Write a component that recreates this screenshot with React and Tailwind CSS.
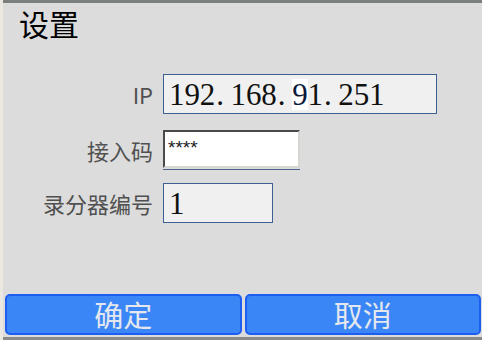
import React from 'react';

const CJK = "font-['Noto_Sans_CJK_SC',sans-serif]";

function Digits({ text, hi }) {
  return (
    <span className="flex">
      {text.split('').map((c, i) => (
        <span
          key={i}
          className={`inline-block w-[15.4px] ${c === '.' ? 'text-left pl-[1px]' : 'text-center'} ${i === hi ? 'bg-white text-[#0a1a3a]' : ''}`}
        >
          {c}
        </span>
      ))}
    </span>
  );
}

function Row({ label, children }) {
  return (
    <div className="flex items-center">
      <div className={`w-[150px] text-right text-[22px] text-[#505050] ${CJK}`}>{label}</div>
      <div className="ml-[10px]">{children}</div>
    </div>
  );
}

export default function App() {
  return (
    <div className="w-[482px] h-[340px] bg-[#dcdcdc] border-l-[3px] border-l-[#ebe8e2] flex flex-col">
      <div className="h-[3px] bg-[#7b807c]" />
      <div className={`h-[40px] pl-[16px] text-[30px] leading-[40px] text-black ${CJK}`}>设置</div>

      <div className="mt-[31px] flex flex-col">
        <Row label="IP">
          <div className="w-[274px] h-[40px] border border-[#3e5f94] bg-[#f0f0f0] flex items-center pl-[5px] text-[31px] text-[#111] font-['Liberation_Serif',serif] leading-none">
            <Digits text="192.168.91.251" hi={8} />
          </div>
        </Row>

        <div className="mt-[16px]">
          <Row label="接入码">
            <div className="w-[137px]">
              <div className="h-[38px] bg-white border-t-2 border-l-2 border-t-[#4a4a4a] border-l-[#4a4a4a] border-b-2 border-r-2 border-b-[#d8d6d0] border-r-[#d8d6d0] pl-[3px] pt-[7px] text-[19px] leading-[18px] text-[#222] font-['Liberation_Sans',sans-serif]">
                ****
              </div>
              <div className="mt-[1px] h-px bg-[#4a6490]" />
            </div>
          </Row>
        </div>

        <div className="mt-[13px]">
          <Row label="录分器编号">
            <div className="w-[110px] h-[40px] border border-[#3e5f94] bg-[#f0f0f0] flex items-center pl-[5px] text-[31px] text-[#111] font-['Liberation_Serif',serif] leading-none">
              1
            </div>
          </Row>
        </div>
      </div>

      <div className="mt-auto flex gap-[3px] pl-[2px] pr-px">
        <button className={`flex-1 h-[41px] rounded-[5px] border-2 border-[#1d5df0] bg-[#3a86f6] text-[29px] leading-none text-[#e4e8ee] ${CJK}`}>
          确定
        </button>
        <button className={`flex-1 h-[41px] rounded-[5px] border-2 border-[#1d5df0] bg-[#3a86f6] text-[29px] leading-none text-[#e4e8ee] ${CJK}`}>
          取消
        </button>
      </div>
      <div className="mt-[2px] h-[3px] bg-[#8a8a8a]" />
    </div>
  );
}
